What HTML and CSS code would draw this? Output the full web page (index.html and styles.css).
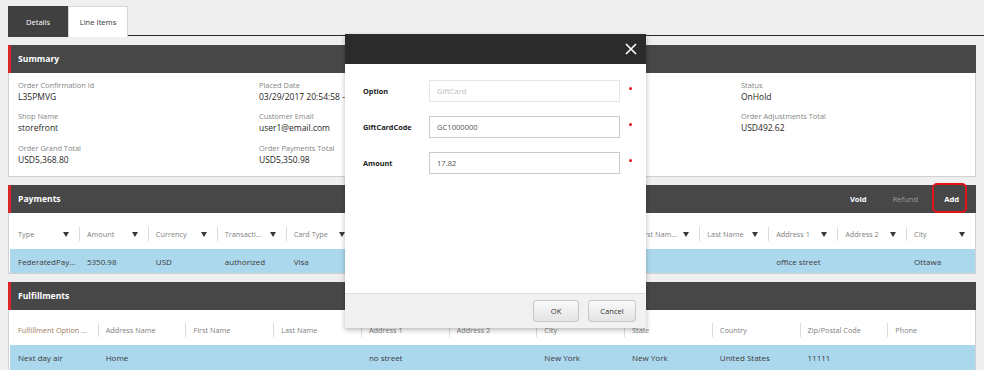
FILE: index.html
```html
<!DOCTYPE html>
<html>
<head>
<meta charset="utf-8">
<link rel="stylesheet" href="styles.css">
</head>
<body>
<div class="tabbar">
  <div class="tab tab-active">Details</div>
  <div class="tab">Line Items</div>
</div>

<section class="panel">
  <div class="panel-head"><span class="panel-title">Summary</span></div>
  <div class="summary">
    <div class="field"><div class="lbl">Order Confirmation Id</div><div class="val">L35PMVG</div></div>
    <div class="field"><div class="lbl">Placed Date</div><div class="val">03/29/2017 20:54:58 -04:00</div></div>
    <div class="field"><div class="lbl">Customer Id</div><div class="val">Entity-Customer-1</div></div>
    <div class="field"><div class="lbl">Status</div><div class="val">OnHold</div></div>
    <div class="field"><div class="lbl">Shop Name</div><div class="val">storefront</div></div>
    <div class="field"><div class="lbl">Customer Email</div><div class="val">user1@email.com</div></div>
    <div class="field"><div class="lbl">Order Line Items Total</div><div class="val">USD4,876.18</div></div>
    <div class="field"><div class="lbl">Order Adjustments Total</div><div class="val">USD492.62</div></div>
    <div class="field"><div class="lbl">Order Grand Total</div><div class="val">USD5,368.80</div></div>
    <div class="field"><div class="lbl">Order Payments Total</div><div class="val">USD5,350.98</div></div>
  </div>
</section>

<section class="panel">
  <div class="panel-head">
    <span class="panel-title">Payments</span>
    <div class="actions">
      <span class="act">Void</span>
      <span class="act act-off">Refund</span>
      <span class="act act-add">Add</span>
    </div>
  </div>
  <div class="tbl pay">
    <div class="thead">
      <div class="th"><span>Type</span><i class="tri"></i></div>
      <div class="th"><span>Amount</span><i class="tri"></i></div>
      <div class="th"><span>Currency</span><i class="tri"></i></div>
      <div class="th"><span>Transacti...</span><i class="tri"></i></div>
      <div class="th"><span>Card Type</span><i class="tri"></i></div>
      <div class="th"><span>Card Num...</span><i class="tri"></i></div>
      <div class="th"><span>Exp. Month</span><i class="tri"></i></div>
      <div class="th"><span>Exp. Year</span><i class="tri"></i></div>
      <div class="th"><span>Email</span><i class="tri"></i></div>
      <div class="th"><span>First Nam...</span><i class="tri"></i></div>
      <div class="th"><span>Last Name</span><i class="tri"></i></div>
      <div class="th"><span>Address 1</span><i class="tri"></i></div>
      <div class="th"><span>Address 2</span><i class="tri"></i></div>
      <div class="th"><span>City</span><i class="tri"></i></div>
    </div>
    <div class="trow">
      <div class="td">FederatedPay...</div>
      <div class="td">5350.98</div>
      <div class="td">USD</div>
      <div class="td">authorized</div>
      <div class="td">Visa</div>
      <div class="td">XXXX1111</div>
      <div class="td">12</div>
      <div class="td">2019</div>
      <div class="td"></div>
      <div class="td"></div>
      <div class="td"></div>
      <div class="td">office street</div>
      <div class="td"></div>
      <div class="td">Ottawa</div>
    </div>
  </div>
</section>

<section class="panel">
  <div class="panel-head"><span class="panel-title">Fulfillments</span></div>
  <div class="tbl ful">
    <div class="thead">
      <div class="th th-sort"><span>Fulfillment Option ...</span></div>
      <div class="th"><span>Address Name</span></div>
      <div class="th"><span>First Name</span></div>
      <div class="th"><span>Last Name</span></div>
      <div class="th"><span>Address 1</span></div>
      <div class="th"><span>Address 2</span></div>
      <div class="th"><span>City</span></div>
      <div class="th"><span>State</span></div>
      <div class="th"><span>Country</span></div>
      <div class="th"><span>Zip/Postal Code</span></div>
      <div class="th"><span>Phone</span></div>
    </div>
    <div class="trow">
      <div class="td">Next day air</div>
      <div class="td">Home</div>
      <div class="td"></div>
      <div class="td"></div>
      <div class="td">no street</div>
      <div class="td"></div>
      <div class="td">New York</div>
      <div class="td">New York</div>
      <div class="td">United States</div>
      <div class="td">11111</div>
      <div class="td"></div>
    </div>
  </div>
</section>

<div class="modal">
  <div class="modal-head">
    <svg class="close" width="12" height="12" viewBox="0 0 12 12"><path d="M1 1L11 11M11 1L1 11" stroke="#fff" stroke-width="1.6" fill="none"/></svg>
  </div>
  <div class="form">
    <div class="frow"><label class="flbl">Option</label><div class="inp inp-dis">GiftCard</div><i class="req"></i></div>
    <div class="frow"><label class="flbl">GiftCardCode</label><div class="inp">GC1000000</div><i class="req"></i></div>
    <div class="frow"><label class="flbl">Amount</label><div class="inp">17.82</div><i class="req"></i></div>
  </div>
  <div class="modal-foot">
    <button class="btn btn-ok">OK</button>
    <button class="btn btn-cancel">Cancel</button>
  </div>
</div>
</body>
</html>
```

FILE: styles.css
```css
* { box-sizing: border-box; }
html, body { margin: 0; }
body {
  background: #efefef;
  padding: 6px 8px 0;
  font-family: "Open Sans", "Liberation Sans", sans-serif;
  color: #222;
  height: 370px;
  overflow: hidden;
  position: relative;
}
.tabbar {
  display: flex;
  height: 30px;
  border-bottom: 1px solid #2a2a2a;
  margin-right: -8px;
}
.tab {
  width: 60px;
  height: 31px;
  margin-bottom: -1px;
  display: flex;
  align-items: center;
  justify-content: center;
  font-size: 7.6px;
  color: #333;
  background: #fff;
  border: 1px solid #d6d6d6;
  border-bottom: none;
}
.tab-active {
  background: #404040;
  color: #fff;
  border-color: #404040;
}
.panel { margin-top: 8px; }
.panel:first-of-type { margin-top: 9px; }
.panel-head {
  height: 28px;
  background: #474747;
  border-left: 3px solid #d8262b;
  padding-left: 7px;
  padding-right: 4px;
  display: flex;
  align-items: center;
  justify-content: space-between;
}
.panel-title {
  color: #fff;
  font-weight: 700;
  font-size: 8.6px;
}
.summary {
  background: #fff;
  border: 1px solid #d2d2d2;
  border-top: none;
  display: grid;
  grid-template-columns: repeat(4, 241px);
  row-gap: 8px;
  padding: 7px 0 10px 9px;
  height: 104px;
}
.lbl {
  font-size: 7.4px;
  line-height: 11px;
  color: #858585;
  white-space: nowrap;
}
.val {
  font-size: 8.5px;
  line-height: 12px;
  color: #262626;
  white-space: nowrap;
}
.actions { display: flex; height: 100%; align-items: center; }
.act {
  padding: 0 13px;
  font-size: 7.6px;
  font-weight: 700;
  color: #fff;
  position: relative;
}
.act-off { color: #9a9a9a; font-weight: 400; }
.act-add::after {
  content: "";
  position: absolute;
  left: 1px;
  right: 5px;
  top: -11px;
  height: 26px;
  border: 2.5px solid #e5121b;
  border-radius: 5px;
}
.tbl {
  background: #fff;
  border-left: 1px solid #d2d2d2;
  border-right: 1px solid #d2d2d2;
  border-bottom: 1px solid #d2d2d2;
  padding-left: 1px;
}
.thead, .trow { display: grid; }
.pay .thead, .pay .trow { grid-template-columns: repeat(14, 1fr); }
.ful .thead, .ful .trow { grid-template-columns: repeat(11, 1fr); }
.thead {
  height: 36px;
  padding-top: 6px;
  align-items: center;
}
.ful .thead { height: 35px; padding-top: 5px; }
.th {
  height: 14px;
  display: flex;
  align-items: center;
  justify-content: space-between;
  padding: 0 10px 0 7px;
  border-left: 1px solid #dcdcdc;
  font-size: 7.3px;
  color: #808080;
  white-space: nowrap;
  overflow: hidden;
}
.th:first-child { border-left-color: transparent; }
.th-sort { color: #a27b5c; }
.tri {
  width: 0;
  height: 0;
  border-left: 3.5px solid transparent;
  border-right: 3.5px solid transparent;
  border-top: 5px solid #3a3a3a;
  flex: none;
}
.trow {
  background: #acd8ed;
  height: 24px;
  align-items: center;
}
.ful .trow { height: 25px; }
.td {
  padding-left: 8px;
  font-size: 8px;
  color: #3a3a3a;
  white-space: nowrap;
  overflow: hidden;
}
.modal {
  position: absolute;
  left: 345px;
  top: 34px;
  width: 301px;
  height: 294px;
  background: #fff;
  box-shadow: 0 2px 5px rgba(0,0,0,0.28);
  display: flex;
  flex-direction: column;
}
.modal-head {
  height: 30px;
  background: #2b2b2b;
  display: flex;
  align-items: center;
  justify-content: flex-end;
  padding-right: 9px;
}
.form {
  padding-top: 16px;
  display: flex;
  flex-direction: column;
  gap: 14px;
}
.frow {
  display: flex;
  align-items: center;
  height: 22px;
}
.flbl {
  width: 84px;
  padding-left: 18px;
  font-size: 7.3px;
  font-weight: 700;
  color: #222;
}
.inp {
  width: 191px;
  height: 22px;
  border: 1px solid #cbcbcb;
  padding-left: 7px;
  display: flex;
  align-items: center;
  font-size: 7.6px;
  color: #555;
}
.inp-dis { border-color: #e6e6e6; color: #bbb; }
.req {
  width: 3px;
  height: 3px;
  border-radius: 50%;
  background: #e8141c;
  margin-left: 9px;
  align-self: flex-start;
  margin-top: 7px;
}
.modal-foot {
  margin-top: auto;
  height: 35px;
  background: #f1f1f1;
  border-top: 1px solid #dedede;
  display: flex;
  align-items: center;
  justify-content: flex-end;
  gap: 9px;
  padding-right: 10px;
}
.btn {
  height: 22px;
  border: 1px solid #c6c6c6;
  border-radius: 3px;
  background: linear-gradient(#f9f9f9, #e4e4e4);
  font-family: inherit;
  font-size: 7.6px;
  color: #333;
  padding: 0;
}
.btn-ok { width: 46px; }
.btn-cancel { width: 48px; }
```
